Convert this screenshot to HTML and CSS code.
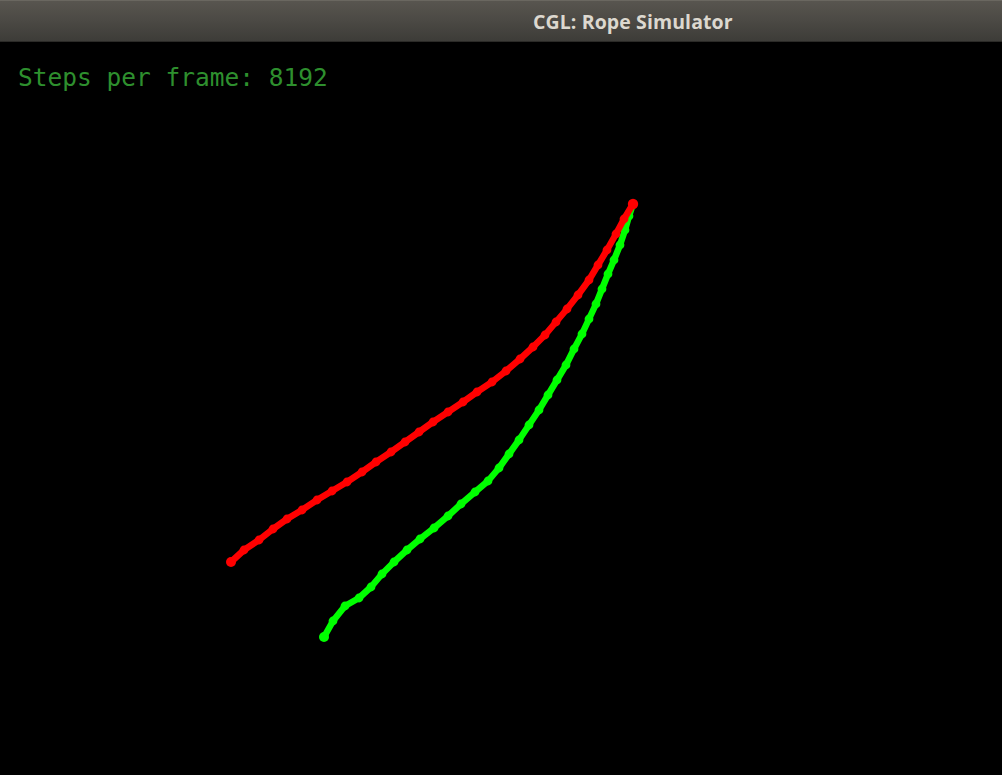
FILE: index.html
```html
<!DOCTYPE html>
<html>
<head>
<meta charset="utf-8">
<title>CGL: Rope Simulator</title>
<link rel="stylesheet" href="styles.css">
</head>
<body>
<div class="window">
  <header class="titlebar">
    <span class="title">CGL: Rope Simulator</span>
  </header>
  <main class="viewport">
    <svg class="canvas" width="1002" height="733" viewBox="0 42 1002 733" xmlns="http://www.w3.org/2000/svg">
      <g class="rope rope-green">
        <polyline points="633,204 629,216 625,230 620,245 614,260 608,274 602,289 596,304 589,319 582,334 574,349 566,365 557,380 548,395 539,410 529,425 519,440 509,454 499,468 488,481 475,492 461,504 448,516 434,528 420,539 407,550 394,562 382,574 371,587 359,598 345,606 333,621 324,637"/>
        <circle cx="629" cy="216" r="4.4"/><circle cx="625" cy="230" r="4.4"/><circle cx="620" cy="245" r="4.4"/><circle cx="614" cy="260" r="4.4"/><circle cx="608" cy="274" r="4.4"/><circle cx="602" cy="289" r="4.4"/><circle cx="596" cy="304" r="4.4"/><circle cx="589" cy="319" r="4.4"/><circle cx="582" cy="334" r="4.4"/><circle cx="574" cy="349" r="4.4"/><circle cx="566" cy="365" r="4.4"/><circle cx="557" cy="380" r="4.4"/><circle cx="548" cy="395" r="4.4"/><circle cx="539" cy="410" r="4.4"/><circle cx="529" cy="425" r="4.4"/><circle cx="519" cy="440" r="4.4"/><circle cx="509" cy="454" r="4.4"/><circle cx="499" cy="468" r="4.4"/><circle cx="488" cy="481" r="4.4"/><circle cx="475" cy="492" r="4.4"/><circle cx="461" cy="504" r="4.4"/><circle cx="448" cy="516" r="4.4"/><circle cx="434" cy="528" r="4.4"/><circle cx="420" cy="539" r="4.4"/><circle cx="407" cy="550" r="4.4"/><circle cx="394" cy="562" r="4.4"/><circle cx="382" cy="574" r="4.4"/><circle cx="371" cy="587" r="4.4"/><circle cx="359" cy="598" r="4.4"/><circle cx="345" cy="606" r="4.4"/><circle cx="333" cy="621" r="4.4"/><circle cx="324" cy="637" r="5"/>
      </g>
      <g class="rope rope-red">
        <polyline points="633,204 624,219 616,234 607,250 598,265 589,280 578,295 567,309 556,322 545,335 533,347 520,359 506,371 492,382 477,392 463,402 448,412 433,422 419,432 405,442 391,452 376,462 362,472 347,482 332,491 317,500 302,510 287,519 273,529 259,540 244,550 231,562"/>
        <circle cx="633" cy="204" r="5.2"/><circle cx="624" cy="219" r="4.4"/><circle cx="616" cy="234" r="4.4"/><circle cx="607" cy="250" r="4.4"/><circle cx="598" cy="265" r="4.4"/><circle cx="589" cy="280" r="4.4"/><circle cx="578" cy="295" r="4.4"/><circle cx="567" cy="309" r="4.4"/><circle cx="556" cy="322" r="4.4"/><circle cx="545" cy="335" r="4.4"/><circle cx="533" cy="347" r="4.4"/><circle cx="520" cy="359" r="4.4"/><circle cx="506" cy="371" r="4.4"/><circle cx="492" cy="382" r="4.4"/><circle cx="477" cy="392" r="4.4"/><circle cx="463" cy="402" r="4.4"/><circle cx="448" cy="412" r="4.4"/><circle cx="433" cy="422" r="4.4"/><circle cx="419" cy="432" r="4.4"/><circle cx="405" cy="442" r="4.4"/><circle cx="391" cy="452" r="4.4"/><circle cx="376" cy="462" r="4.4"/><circle cx="362" cy="472" r="4.4"/><circle cx="347" cy="482" r="4.4"/><circle cx="332" cy="491" r="4.4"/><circle cx="317" cy="500" r="4.4"/><circle cx="302" cy="510" r="4.4"/><circle cx="287" cy="519" r="4.4"/><circle cx="273" cy="529" r="4.4"/><circle cx="259" cy="540" r="4.4"/><circle cx="244" cy="550" r="4.4"/><circle cx="231" cy="562" r="5"/>
      </g>
    </svg>
    <div class="hud">Steps per frame: 8192</div>
  </main>
</div>
</body>
</html>
```

FILE: styles.css
```css
html, body {
  margin: 0;
  padding: 0;
  background: #000;
}
.window {
  width: 1002px;
  height: 775px;
  overflow: hidden;
  display: flex;
  flex-direction: column;
  background: #000;
}
.titlebar {
  height: 42px;
  flex: 0 0 42px;
  box-sizing: border-box;
  border-top: 1px solid #6a6760;
  border-bottom: 1px solid #2b2a27;
  background: linear-gradient(to bottom, #58554f 0%, #4b4944 50%, #3d3c38 100%);
  display: flex;
  align-items: center;
  padding-left: 533px;
}
.title {
  font-family: "Open Sans", "DejaVu Sans", sans-serif;
  font-weight: 700;
  font-size: 19.5px;
  color: #dcd8cf;
  letter-spacing: 0.1px;
  margin-top: 0;
}
.viewport {
  position: relative;
  flex: 1 1 auto;
  background: #000;
}
.canvas {
  position: absolute;
  left: 0;
  top: 0;
  display: block;
}
.rope polyline {
  fill: none;
  stroke-width: 6.5;
  stroke-linejoin: round;
  stroke-linecap: round;
}
.rope-red polyline { stroke: #ff0000; }
.rope-red circle { fill: #ff0000; }
.rope-green polyline { stroke: #00ff00; }
.rope-green circle { fill: #00ff00; }
.hud {
  position: relative;
  padding: 21px 0 0 18px;
  font-family: "DejaVu Sans Mono", "Liberation Mono", monospace;
  font-size: 24.5px;
  line-height: 30px;
  color: #2e8f2e;
}
```
